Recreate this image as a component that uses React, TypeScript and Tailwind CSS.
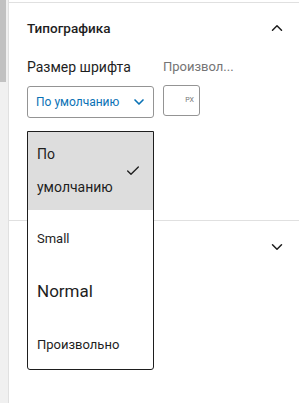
import { Check, ChevronDown, ChevronUp } from "lucide-react";

const font = { fontFamily: "Roboto, 'Noto Sans', sans-serif" };

export default function App() {
  return (
    <div className="flex h-[403px] w-[299px] overflow-hidden bg-white text-[#1e1e1e]" style={font}>
      {/* scroll gutter */}
      <div className="flex w-[8px] shrink-0 flex-col bg-[#f0f0f0]">
        <div className="h-[82px] w-[6px] bg-[#c1c1c1]" />
      </div>
      <div className="relative flex-1 border-l border-[#e0e0e0] pt-[2px]">
        {/* Типографика panel */}
        <div className="h-[218px] border-t border-[#e0e0e0]">
          <div className="flex h-[50px] items-center justify-between pl-[18px] pr-[13px]">
            <span className="text-[13.5px] font-medium">Типографика</span>
            <ChevronUp size={18} strokeWidth={2} />
          </div>
          <div className="flex gap-[9px] pl-[18px] pt-[6px]">
            <div className="flex w-[127px] flex-col">
              <span className="h-[27px] text-[14px] leading-[16px]">Размер шрифта</span>
              <div className="flex h-[32px] items-center justify-between rounded-[3px] border border-[#949494] pl-[8px] pr-[6px] text-[12px] text-[#0a72b5]">
                <span>По умолчанию</span>
                <ChevronDown size={16} strokeWidth={2.5} />
              </div>
            </div>
            <div className="flex w-[80px] flex-col">
              <span className="h-[26px] truncate text-[13px] leading-[16px] text-[#757575]">Произвол...</span>
              <div className="flex h-[31px] w-[37px] items-center justify-end rounded-[3px] border border-[#949494] pr-[5px] text-[7px] text-[#757575]">
                PX
              </div>
            </div>
          </div>
        </div>
        {/* second panel */}
        <div className="border-t border-[#e0e0e0]">
          <div className="flex h-[52px] items-center justify-end pr-[13px]">
            <ChevronDown size={18} strokeWidth={2} />
          </div>
        </div>

        {/* open font-size menu */}
        <div className="absolute left-[18px] top-[131px] flex h-[239px] w-[127px] flex-col rounded-b-[3px] border border-[#1e1e1e] bg-white">
          <div className="flex h-[78px] shrink-0 items-center justify-between bg-[#dddddd] pl-[9px] pr-[12px]">
            <span className="text-[14px] leading-[33px]">
              По
              <br />
              умолчанию
            </span>
            <Check size={16} strokeWidth={2} />
          </div>
          <div className="flex h-[54px] shrink-0 items-center pl-[9px] pt-[4px] text-[13px]">Small</div>
          <div className="flex h-[52px] shrink-0 items-center pl-[9px] pt-[4px] text-[17px]">Normal</div>
          <div className="flex h-[53px] shrink-0 items-center pl-[9px] pt-[4px] text-[13px]">Произвольно</div>
        </div>
      </div>
    </div>
  );
}
